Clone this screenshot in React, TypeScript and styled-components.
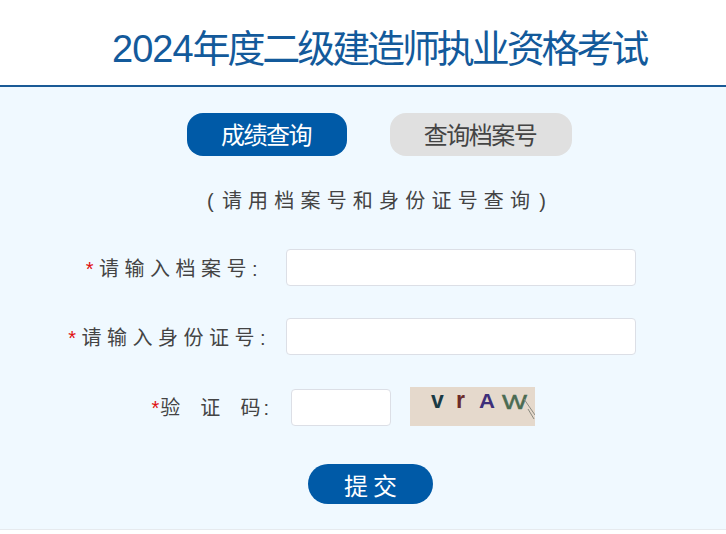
import React from 'react'
import styled, { createGlobalStyle } from 'styled-components'

const GlobalStyle = createGlobalStyle`
    html, body {
        margin: 0;
        padding: 0;
        background-color: #fff;
        font-family: "Liberation Sans", "Noto Sans CJK SC", sans-serif;
    }
`

const Header = styled.header`
    height: 87px;
    box-sizing: border-box;
    padding: 28px 0 0 112px;
    background-color: #fff;
    border-bottom: 2px solid #1a5a96;
`

const Title = styled.h1`
    margin: 0;
    font-size: 38px;
    line-height: 42px;
    font-weight: 400;
    color: #135a9b;
    letter-spacing: -3.1px;
    white-space: nowrap;
`

const Digits = styled.span`
    letter-spacing: -1px;
`

const Main = styled.main`
    height: 443px;
    box-sizing: border-box;
    background-color: #f0f9ff;
    border-bottom: 1px solid #e6eaee;
    padding-top: 26px;
`

const Tabs = styled.div`
    display: flex;
    padding-left: 187px;
    gap: 43px;
`

const Tab = styled.div<{ $active?: boolean; $width: number }>`
    width: ${p => p.$width}px;
    height: 43px;
    box-sizing: border-box;
    padding: 0 2px 3px 0;
    border-radius: 16px;
    display: flex;
    align-items: center;
    justify-content: center;
    font-size: 24px;
    letter-spacing: -1.5px;
    background-color: ${p => (p.$active ? '#005aa7' : '#e0e0e0')};
    color: ${p => (p.$active ? '#fff' : '#444')};
`

const Note = styled.p`
    margin: 31px 0 0;
    padding-left: 207px;
    font-size: 20px;
    line-height: 28px;
    letter-spacing: 6.2px;
    color: #444;
    white-space: nowrap;
`

const Paren = styled.span<{ $before?: number; $after?: number }>`
    margin-left: ${p => p.$before || 0}px;
    margin-right: ${p => p.$after || 0}px;
`

const Row = styled.div<{ $top: number }>`
    display: flex;
    align-items: center;
    margin-top: ${p => p.$top}px;
`

const Label = styled.label<{ $width: number; $spacing: number }>`
    width: ${p => p.$width}px;
    flex-shrink: 0;
    padding-top: 3px;
    text-align: right;
    font-size: 20px;
    line-height: 24px;
    color: #444;
    letter-spacing: ${p => p.$spacing}px;
    white-space: nowrap;
`

const Star = styled.span<{ $tight?: boolean }>`
    color: #e01010;
    ${p => (p.$tight ? 'letter-spacing: 1px;' : '')}
`

const Input = styled.input<{ $width: number; $left: number; $top?: number }>`
    width: ${p => p.$width}px;
    height: 37px;
    margin-left: ${p => p.$left}px;
    margin-top: ${p => p.$top || 0}px;
    box-sizing: border-box;
    background-color: #fff;
    border: 1px solid #dcdfe6;
    border-radius: 4px;
    outline: none;
`

const Captcha = styled.svg`
    display: block;
    width: 125px;
    height: 39px;
    margin-left: 19px;
`

const Submit = styled.button`
    display: block;
    width: 125px;
    height: 40px;
    margin: 38px 0 0 308px;
    padding: 0 0 0 5px;
    border: 0;
    border-radius: 20px;
    background-color: #005aa7;
    color: #fff;
    font-family: inherit;
    font-size: 24px;
    letter-spacing: 5px;
`

const App = () => {
    return (
        <>
            <GlobalStyle />
            <Header>
                <Title><Digits>2024</Digits>年度二级建造师执业资格考试</Title>
            </Header>
            <Main>
                <Tabs>
                    <Tab $active $width={160}>成绩查询</Tab>
                    <Tab $width={182}>查询档案号</Tab>
                </Tabs>
                <Note><Paren $after={2}>(</Paren>请用档案号和身份证号查询<Paren $before={3}>)</Paren></Note>
                <Row $top={34}>
                    <Label $width={263} $spacing={5.5}><Star>*</Star>请输入档案号:</Label>
                    <Input $width={350} $left={23} />
                </Row>
                <Row $top={32}>
                    <Label $width={271} $spacing={5.5}><Star>*</Star>请输入身份证号:</Label>
                    <Input $width={350} $left={15} />
                </Row>
                <Row $top={32}>
                    <Label $width={272} $spacing={3}><Star $tight>*</Star>验&nbsp;&nbsp;证&nbsp;&nbsp;码:</Label>
                    <Input $width={100} $left={19} $top={2} />
                    <Captcha viewBox="0 0 125 39">
                        <rect width="125" height="39" fill="#e5d9cc" />
                        <text x="21" y="21" fontFamily="Liberation Sans" fontSize="23" fontWeight="700" fill="#1a3a44">v</text>
                        <text x="46" y="21" fontFamily="Liberation Sans" fontSize="23" fontWeight="700" fill="#6b2b2a">r</text>
                        <text x="69" y="21" fontFamily="Liberation Sans" fontSize="21" fontWeight="700" textLength="16" lengthAdjust="spacingAndGlyphs" fill="#3d2f7a">A</text>
                        <text x="92" y="22" fontFamily="Liberation Sans" fontSize="21" textLength="25" lengthAdjust="spacingAndGlyphs" stroke="#4a6b52" strokeWidth="0.5" fill="#4a6b52">W</text>
                        <path d="M114 12 L125 28 M118 22 L124 32" stroke="#8a8a80" strokeWidth="1" fill="none" />
                    </Captcha>
                </Row>
                <Submit>提交</Submit>
            </Main>
        </>
    )
}

export default App
